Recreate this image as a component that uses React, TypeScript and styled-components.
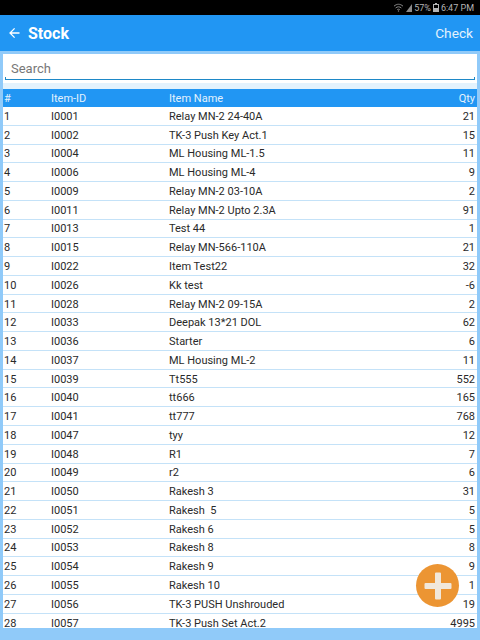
import React from "react";
import styled, { createGlobalStyle } from "styled-components";

const Global = createGlobalStyle`
  html, body { margin: 0; padding: 0; background: #90caf9; }
  body { font-family: Roboto, "Liberation Sans", sans-serif; }
  #root { width: 480px; height: 640px; overflow: hidden; }
`;

const Page = styled.div`
  position: relative;
  width: 480px;
  height: 640px;
  display: flex;
  flex-direction: column;
  background: #90caf9;
  overflow: hidden;
`;

const StatusBar = styled.div`
  height: 15px;
  flex: none;
  background: #000;
  color: #b4b4b4;
  font-size: 9px;
  display: flex;
  align-items: center;
  justify-content: flex-end;
  gap: 2px;
  padding-right: 6px;
`;

const AppBar = styled.header`
  height: 36px;
  flex: none;
  background: #2196f3;
  color: #fff;
  display: flex;
  align-items: center;
  padding: 0 7px 0 9px;
`;

const Title = styled.h1`
  margin: 0 0 0 8px;
  font-size: 16px;
  font-weight: 700;
  flex: 1;
`;

const Action = styled.span`
  font-size: 13.7px;
  color: #e3f2fd;
`;

const Body = styled.main`
  flex: 1;
  min-height: 0;
  margin: 3px 3px 12px;
  display: flex;
  flex-direction: column;
  background: #e3f2fd;
  overflow: hidden;
`;

const SearchBox = styled.div`
  height: 29px;
  flex: none;
  background: #fff;
  padding: 0 2px 3px;
  box-sizing: border-box;
  display: flex;
`;

const SearchField = styled.div`
  position: relative;
  flex: 1;
  min-width: 0;
  display: flex;
  border-bottom: 1px solid #1e88c7;
  &::before,
  &::after {
    content: "";
    position: absolute;
    bottom: 0;
    width: 1px;
    height: 2px;
    background: #1e88c7;
  }
  &::before { left: 0; }
  &::after { right: 0; }
`;

const SearchInput = styled.input`
  flex: 1;
  min-width: 0;
  border: 0;
  outline: 0;
  padding: 3px 0 0 6px;
  font: 13px Roboto, sans-serif;
  background: transparent;
  &::placeholder { color: #777; opacity: 1; }
`;

const Gap = styled.div`
  height: 6px;
  flex: none;
  background: #e3f2fd;
`;

const columns = "47px 118px 1fr 60px";

const HeadRow = styled.div`
  height: 18px;
  flex: none;
  display: grid;
  grid-template-columns: ${columns};
  align-items: center;
  background: #2196f3;
  color: #e3f2fd;
  font-size: 11px;
  padding: 0 2px 0 1px;
`;

const DataRow = styled.div`
  height: 16.78px;
  flex: none;
  display: grid;
  grid-template-columns: ${columns};
  align-items: center;
  background: #fff;
  color: #2a2a2a;
  font-size: 11px;
  padding: 1px 2px 0 1px;
  border-bottom: 1px solid #c4e2f8;
`;

const Qty = styled.span`
  text-align: right;
`;

const ItemName = styled.span`
  white-space: pre;
`;

const Fab = styled.button`
  position: absolute;
  left: 416px;
  top: 564px;
  width: 43px;
  height: 43px;
  padding: 0;
  border: 0;
  border-radius: 50%;
  background: #ec9533;
  display: flex;
  align-items: center;
  justify-content: center;
`;

const rows: [string, string, string][] = [
  ["I0001", "Relay MN-2 24-40A", "21"],
  ["I0002", "TK-3 Push Key Act.1", "15"],
  ["I0004", "ML Housing ML-1.5", "11"],
  ["I0006", "ML Housing ML-4", "9"],
  ["I0009", "Relay MN-2 03-10A", "2"],
  ["I0011", "Relay MN-2 Upto 2.3A", "91"],
  ["I0013", "Test 44", "1"],
  ["I0015", "Relay MN-566-110A", "21"],
  ["I0022", "Item Test22", "32"],
  ["I0026", "Kk test", "-6"],
  ["I0028", "Relay MN-2 09-15A", "2"],
  ["I0033", "Deepak 13*21 DOL", "62"],
  ["I0036", "Starter", "6"],
  ["I0037", "ML Housing ML-2", "11"],
  ["I0039", "Tt555", "552"],
  ["I0040", "tt666", "165"],
  ["I0041", "tt777", "768"],
  ["I0047", "tyy", "12"],
  ["I0048", "R1", "7"],
  ["I0049", "r2", "6"],
  ["I0050", "Rakesh 3", "31"],
  ["I0051", "Rakesh  5", "5"],
  ["I0052", "Rakesh 6", "5"],
  ["I0053", "Rakesh 8", "8"],
  ["I0054", "Rakesh 9", "9"],
  ["I0055", "Rakesh 10", "1"],
  ["I0056", "TK-3 PUSH Unshrouded", "19"],
  ["I0057", "TK-3 Push Set Act.2", "4995"],
];

export default function App() {
  return (
    <Page>
      <Global />
      <StatusBar>
        <svg width="11" height="9" viewBox="0 0 11 9" fill="none" stroke="#8a8a8a" strokeWidth="1">
          <path d="M1 3.2C3.8.6 7.2.6 10 3.2M2.6 5C4.4 3.4 6.6 3.4 8.4 5M4.2 6.7c.8-.7 1.8-.7 2.6 0" />
          <circle cx="5.5" cy="8" r=".7" fill="#8a8a8a" stroke="none" />
        </svg>
        <svg width="6" height="8" viewBox="0 0 6 8" fill="#8a8a8a">
          <path d="M6 0v8H0z" />
        </svg>
        <span>57%</span>
        <svg width="6" height="9" viewBox="0 0 6 9" fill="#b4b4b4">
          <path d="M2 0h2v1h2v8H0V1h2zM1 2v3h4V2z" />
        </svg>
        <span>6:47 PM</span>
      </StatusBar>
      <AppBar>
        <svg width="11" height="12" viewBox="0 0 11 12" fill="none" stroke="#fff" strokeWidth="1.3">
          <path d="M10.5 6H1M5.6 1.4 1 6l4.6 4.6" />
        </svg>
        <Title>Stock</Title>
        <Action>Check</Action>
      </AppBar>
      <Body>
        <SearchBox>
          <SearchField>
            <SearchInput placeholder="Search" readOnly />
          </SearchField>
        </SearchBox>
        <Gap />
        <HeadRow>
          <span>#</span>
          <span>Item-ID</span>
          <span>Item Name</span>
          <Qty>Qty</Qty>
        </HeadRow>
        {rows.map((r, i) => (
          <DataRow key={r[0]}>
            <span>{i + 1}</span>
            <span>{r[0]}</span>
            <ItemName>{r[1]}</ItemName>
            <Qty>{r[2]}</Qty>
          </DataRow>
        ))}
      </Body>
      <Fab aria-label="Add">
        <svg width="28" height="28" viewBox="0 0 28 28" fill="#f1e7da">
          <path d="M11 1.5a1 1 0 0 1 1-1h4a1 1 0 0 1 1 1V11h9.500a1 1 0 0 1 1 1v4a1 1 0 0 1-1 1H17v9.500a1 1 0 0 1-1 1h-4a1 1 0 0 1-1-1V17H1.500a1 1 0 0 1-1-1v-4a1 1 0 0 1 1-1H11z" />
        </svg>
      </Fab>
    </Page>
  );
}
